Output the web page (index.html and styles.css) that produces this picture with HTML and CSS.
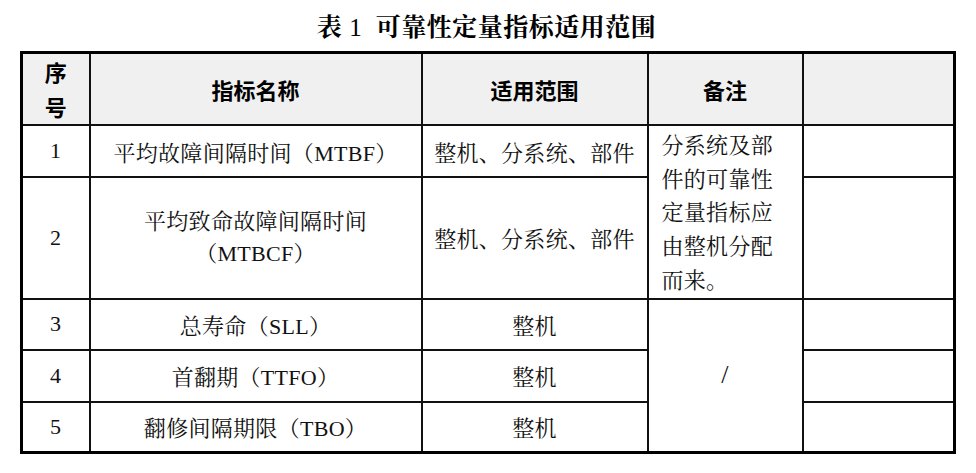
FILE: index.html
```html
<!DOCTYPE html>
<html lang="zh-CN">
<head>
<meta charset="utf-8">
<title>表 1 可靠性定量指标适用范围</title>
<link rel="stylesheet" href="styles.css">
</head>
<body>
<div class="page">
  <h1 class="title">表 <span class="title-num">1</span>  可靠性定量指标适用范围</h1>
  <table class="spec">
    <colgroup>
      <col class="c-no">
      <col class="c-name">
      <col class="c-scope">
      <col class="c-note">
      <col class="c-extra">
    </colgroup>
    <thead>
      <tr class="r-head">
        <th class="head-no">序<br>号</th>
        <th>指标名称</th>
        <th>适用范围</th>
        <th>备注</th>
        <th></th>
      </tr>
    </thead>
    <tbody>
      <tr class="r-1">
        <td>1</td>
        <td>平均故障间隔时间（MTBF）</td>
        <td>整机、分系统、部件</td>
        <td class="note" rowspan="2"><div class="note-text">分系统及部件的可靠性定量指标应由整机分配而来。</div></td>
        <td></td>
      </tr>
      <tr class="r-2">
        <td>2</td>
        <td class="two-line">平均致命故障间隔时间<br>（MTBCF）</td>
        <td>整机、分系统、部件</td>
        <td></td>
      </tr>
      <tr class="r-3">
        <td>3</td>
        <td>总寿命（SLL）</td>
        <td>整机</td>
        <td class="slash" rowspan="3">/</td>
        <td></td>
      </tr>
      <tr class="r-4">
        <td>4</td>
        <td>首翻期（TTFO）</td>
        <td>整机</td>
        <td></td>
      </tr>
      <tr class="r-5">
        <td>5</td>
        <td>翻修间隔期限（TBO）</td>
        <td>整机</td>
        <td></td>
      </tr>
    </tbody>
  </table>
</div>
</body>
</html>
```
FILE: styles.css
```css
html, body {
  margin: 0;
  padding: 0;
  background: #ffffff;
}

.page {
  width: 976px;
  padding: 0 0 0 20px;
  box-sizing: border-box;
  color: #000;
}

.title {
  margin: 0;
  height: 51px;
  line-height: 56px;
  width: 933px;
  text-align: center;
  white-space: pre;
  font-family: "Liberation Serif", "Noto Serif CJK SC", "Noto Sans CJK SC", serif;
  font-size: 25px;
  font-weight: bold;
  letter-spacing: 0.5px;
}

.title-num {
  font-weight: normal;
}

.spec {
  border-collapse: collapse;
  table-layout: fixed;
  width: 933px;
  border: 3px solid #000;
  font-family: "Liberation Serif", "Noto Serif CJK SC", "Noto Sans CJK SC", serif;
  font-size: 22px;
  letter-spacing: 0.3px;
  color: #111;
}

.c-no { width: 68px; }
.c-name { width: 332px; }
.c-scope { width: 226px; }
.c-note { width: 155px; }
.c-extra { width: 152px; }

.spec th,
.spec td {
  border: 2px solid #111;
  padding: 0;
  text-align: center;
  vertical-align: middle;
  font-weight: normal;
}

.spec th {
  background: #f0f0f0;
  font-family: "Noto Sans CJK SC", sans-serif;
  font-weight: bold;
  font-size: 22px;
  letter-spacing: 0;
  color: #000;
}

.head-no {
  line-height: 35px;
}

.r-head { height: 70px; }
.r-1 { height: 52px; }
.r-2 { height: 121px; }
.r-3 { height: 51px; }
.r-4 { height: 52px; }
.r-5 { height: 51px; }

.two-line {
  line-height: 32px;
}

.spec td.note {
  vertical-align: top;
  text-align: left;
  padding: 3px 0 0 13px;
}

.note-text {
  width: 116px;
  line-height: 33.7px;
}

.spec td.slash {
  font-size: 26px;
}
```
